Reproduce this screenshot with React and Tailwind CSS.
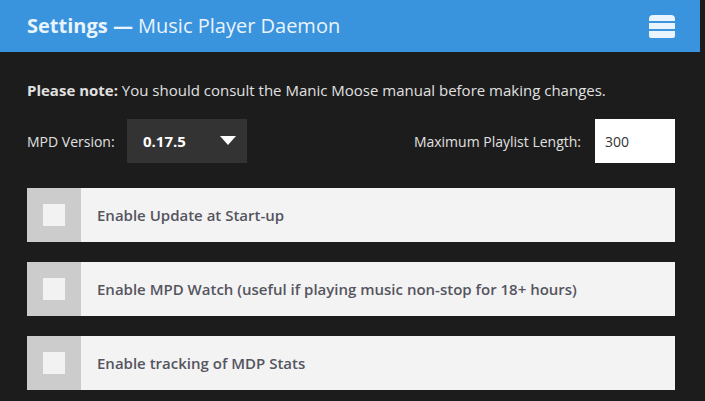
const rows = [
  'Enable Update at Start-up',
  'Enable MPD Watch (useful if playing music non-stop for 18+ hours)',
  'Enable tracking of MDP Stats',
];

function MenuIcon() {
  return (
    <svg width="26" height="23" viewBox="0 0 26 23" fill="#e9f4fd">
      <path d="M0 4a4 4 0 0 1 4-4h18a4 4 0 0 1 4 4v2H0z" />
      <rect x="0" y="8" width="26" height="6" />
      <path d="M0 16h26v5a2 2 0 0 1-2 2H2a2 2 0 0 1-2-2z" />
    </svg>
  );
}

export default function App() {
  return (
    <div className="min-h-screen w-full bg-[#1c1c1c] text-[#e0e0e0]" style={{ fontFamily: '"Open Sans", sans-serif' }}>
      <header className="w-[700px] h-[52px] bg-[#3a93dd] flex items-center justify-between pl-[27px] pr-[25px]">
        <h1 className="text-[20px] text-[#e9f4fd] leading-none">
          <span className="font-bold">Settings —</span> Music Player Daemon
        </h1>
        <MenuIcon />
      </header>
      <div className="w-[700px] px-[27px] pr-[25px]">
        <p className="text-[15px] pt-[28px] leading-[20px]">
          <span className="font-bold">Please note:</span> You should consult the Manic Moose manual before making changes.
        </p>
        <div className="flex items-center justify-between mt-[19px]">
          <div className="flex items-center">
            <span className="text-[14px] w-[100px]">MPD Version:</span>
            <div className="w-[120px] h-[44px] bg-[#333333] flex items-center justify-between pl-[16px] pr-[11px]">
              <span className="text-[15px] font-bold text-white">0.17.5</span>
              <svg width="16" height="10" viewBox="0 0 16 10" fill="#ffffff">
                <path d="M0 0h16L8 9z" />
              </svg>
            </div>
          </div>
          <div className="flex items-center">
            <span className="text-[14px] mr-[14px]">Maximum Playlist Length:</span>
            <div className="w-[80px] h-[44px] bg-white flex items-center pl-[10px] text-[14px] text-[#333333]">300</div>
          </div>
        </div>
        <div className="flex flex-col gap-[20px] mt-[25px]">
          {rows.map((label) => (
            <div key={label} className="flex h-[54px] bg-[#f3f3f3]">
              <div className="w-[54px] bg-[#cccccc] flex items-center justify-center">
                <div className="w-[22px] h-[22px] bg-[#f2f2f2]" />
              </div>
              <div className="flex items-center pl-[16px] text-[15px] font-semibold text-[#55555f]">{label}</div>
            </div>
          ))}
        </div>
      </div>
    </div>
  );
}
